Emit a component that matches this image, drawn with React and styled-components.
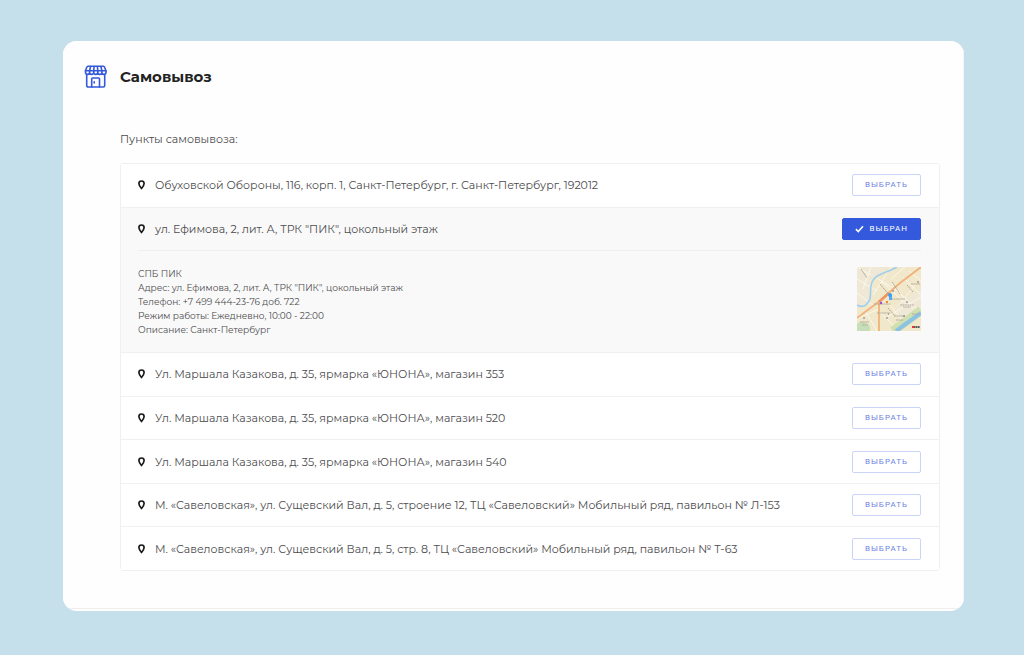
import React from 'react'
import styled, { createGlobalStyle, css } from 'styled-components'

const GlobalStyle = createGlobalStyle`
*{
    box-sizing:border-box;
}
body{
    margin:0;
    background:#c5dfeb;
    color:#4c4c4e;
    font-family:Montserrat, Inter, "Noto Sans", sans-serif;
}
`
const Page = styled.div`
min-height:100vh;
display:flex;
padding:41px 60px 44px 63px;
`
const Card = styled.main`
flex:1;
min-width:0;
display:flex;
overflow:hidden;
padding:0 0 2px;
background:#fff;
border-radius:14px;
`
const CardBody = styled.div`
flex:1;
min-width:0;
display:flex;
flex-direction:column;
padding:24px 23px 37px 21px;
background:#fefefe;
border-right:1px solid #f1f3f4;
border-bottom:1px solid #eeeeef;
`
const Header = styled.header`
display:flex;
align-items:center;
gap:12px;
height:24px;
margin:0 0 42px;
`
const Title = styled.h1`
margin:0;
font-size:15px;
line-height:24px;
font-weight:700;
color:#222;
`
const Section = styled.section`
flex:1;
display:flex;
flex-direction:column;
margin:0 0 0 36px;
`
const Subtitle = styled.h2`
margin:0 0 16px;
font-size:11px;
line-height:16px;
font-weight:400;
`
const List = styled.ul`
flex:1;
display:flex;
flex-direction:column;
margin:0;
padding:0;
list-style:none;
border:1px solid #f0f0f1;
border-radius:3px;
`
const Item = styled.li`
flex:1 0 auto;
display:flex;
flex-direction:column;
padding:0 18px 0 17px;
background:${({ $selected }) => ($selected ? '#f9f9f9' : '#fff')};
& + &{
    border-top:1px solid #f0f0f1;
}
`
const Row = styled.div`
flex:1 0 auto;
display:flex;
align-items:center;
gap:9px;
min-height:42px;
`
const Address = styled.span`
flex:1;
font-size:11px;
line-height:16px;
`
const SelectButton = styled.button`
display:flex;
align-items:center;
justify-content:center;
gap:6px;
height:22px;
padding:0 12px;
font-family:Roboto, Inter, sans-serif;
font-size:8px;
line-height:12px;
letter-spacing:1px;
text-transform:uppercase;
color:#6f84e3;
background:#fff;
border:1px solid #c9d4f8;
border-radius:2px;
cursor:pointer;
${({ $selected }) => $selected && css`
    color:#fff;
    background:#3459dc;
    border-color:#3459dc;
`}
`
const Details = styled.div`
display:flex;
justify-content:space-between;
align-items:flex-start;
padding:16px 0 15px;
border-top:1px solid #efefef;
`
const Info = styled.p`
margin:0;
font-size:9px;
line-height:14px;
`
const InfoLine = styled.span`
display:block;
`
const Map = styled.svg`
display:block;
width:64px;
height:64px;
`

const points = [
    { id: 1, address: 'Обуховской Обороны, 116, корп. 1, Санкт-Петербург, г. Санкт-Петербург, 192012' },
    {
        id: 2,
        address: 'ул. Ефимова, 2, лит. А, ТРК "ПИК", цокольный этаж',
        info: [
            'СПБ ПИК',
            'Адрес: ул. Ефимова, 2, лит. А, ТРК "ПИК", цокольный этаж',
            'Телефон: +7 499 444-23-76 доб. 722',
            'Режим работы: Ежедневно, 10:00 - 22:00',
            'Описание: Санкт-Петербург',
        ],
    },
    { id: 3, address: 'Ул. Маршала Казакова, д. 35, ярмарка «ЮНОНА», магазин 353' },
    { id: 4, address: 'Ул. Маршала Казакова, д. 35, ярмарка «ЮНОНА», магазин 520' },
    { id: 5, address: 'Ул. Маршала Казакова, д. 35, ярмарка «ЮНОНА», магазин 540' },
    { id: 6, address: 'М. «Савеловская», ул. Сущевский Вал, д. 5, строение 12, ТЦ «Савеловский» Мобильный ряд, павильон № Л-153' },
    { id: 7, address: 'М. «Савеловская», ул. Сущевский Вал, д. 5, стр. 8, ТЦ «Савеловский» Мобильный ряд, павильон № Т-63' },
]

function StoreIcon() {
    return (
        <svg width="24" height="24" viewBox="0 0 24 24" fill="none" stroke="#3459dc" strokeWidth="1.6" strokeLinecap="round" strokeLinejoin="round" aria-hidden="true">
            <path d="M4 1.300h15.400a1.300 1.300 0 0 1 1.200.9l1.300 3.600H1.500l1.300-3.600A1.300 1.300 0 0 1 4 1.300z" />
            <path d="M1.500 5.800v1.500a2 2 0 0 0 4.100 0V5.800m0 1.500a2 2 0 0 0 4.100 0V5.800m0 1.500a2 2 0 0 0 4.100 0V5.800m0 1.500a2 2 0 0 0 4.100 0V5.800m0 1.500a2 2 0 0 0 4.100 0V5.800" />
            <path d="M6.600 1.500l-1 4.300M10.100 1.500l-.4 4.300M13.400 1.500l.4 4.300M16.900 1.500l1 4.300" />
            <path d="M2.700 10v10.500A1.500 1.500 0 0 0 4.200 22h15a1.500 1.500 0 0 0 1.500-1.500V10" />
            <path d="M7.700 22v-8.200a.8.8 0 0 1 .8-.8h6.200a.8.8 0 0 1 .8.8V22M10.200 16.800v1.200" />
        </svg>
    )
}

function PinIcon() {
    return (
        <svg width="8" height="10" viewBox="0 0 8 10" fill="none" stroke="#1c1c1c" strokeWidth="1.7" strokeLinejoin="round" aria-hidden="true">
            <path d="M3.500 8.500C2.100 6.900.9 5.200.9 3.600a2.600 2.600 0 0 1 5.200 0c0 1.600-1.200 3.300-2.600 4.900z" />
        </svg>
    )
}

function CheckIcon() {
    return (
        <svg width="9" height="8" viewBox="0 0 9 8" fill="none" stroke="#fff" strokeWidth="1.6" aria-hidden="true">
            <path d="M.9 4.200 3.300 6.500 8 1.300" />
        </svg>
    )
}

function PickupMap() {
    return (
        <Map viewBox="0 0 64 64" role="img" aria-label="Карта">
            <rect width="64" height="64" fill="#f1e8cc" />
            <path d="M0 0h30L13 14 12 38 0 40zM38 40l26-18v16L44 56z" fill="#efe8d6" />
            <path d="M0 0 14 8M14 0l-8 22M0 12l20 12M18 10l26 16M34 0 16 28M24 14l26 24M34 16l22 26M48 0 34 12M46 10l18 18M52 4l12 10M0 26l16 12M40 24l22 20M64 30 30 50M22 44l18 18M8 44l12 20M0 52l22-10M30 34l20 26M58 18 42 38" stroke="#fbf7e9" strokeWidth="1" fill="none" />
            <path d="M40 0C30 6 18 7 15 15s0 14-3 19-6 7-12 4" stroke="#a0cfee" strokeWidth="1.600" fill="none" />
            <path d="M64 43 50 54l-14 10" stroke="#cfdfb0" strokeWidth="9" fill="none" />
            <path d="M64 46 50 56l-11 8" stroke="#8cc3e2" strokeWidth="4" fill="none" />
            <path d="M0 57c5-4 10-2 13 3v4H0z" fill="#c6dfb8" />
            <path d="M64 0 43 16 20 36 0 51M22 36v28" stroke="#f1b27a" strokeWidth="1.800" fill="none" />
            <path d="M32 26 22 35" stroke="#ef9560" strokeWidth="2.400" fill="none" />
            <path d="M4 2l6 9M23 17l10 12M35 15l8 12M50 18l6 7M31 41l7 8" stroke="#a99f90" strokeWidth=".9" strokeDasharray="2 .6" />
            <path d="M34 32h14M17 37h17M20 46h13M43 38h14M46 40h8M54 17h9M37 49h11M39 53h7M3 55h9M5 58h6M55 47h8" stroke="#b0a799" strokeWidth=".9" strokeDasharray="2 .4" />
            <path d="M6 51h2M29 51h2M46 49h2M49 35h2M60 15h2M35 24h2M31 47h1" stroke="#77757f" strokeWidth="1.200" />
            <path d="M32 27h3v6h-3z" fill="#55aaf2" />
            <circle cx="33" cy="28" r="2" fill="#3fa0f4" />
            <circle cx="24" cy="36" r="1.200" fill="#9b4be0" />
            <path d="M29 35h2" stroke="#f08a38" strokeWidth="2" />
            <path d="M55 60h8" stroke="#5d5a5a" strokeWidth="2.200" strokeDasharray="1.500 .4" />
            <path d="M55 60h2" stroke="#e33" strokeWidth="2.200" />
        </Map>
    )
}

export default function App() {
    const [selected, setSelected] = React.useState(2)

    return (
        <>
            <GlobalStyle />
            <Page>
                <Card>
                    <CardBody>
                        <Header>
                            <StoreIcon />
                            <Title>Самовывоз</Title>
                        </Header>
                        <Section>
                            <Subtitle>Пункты самовывоза:</Subtitle>
                            <List>
                                {points.map(point => {
                                    const isSelected = point.id === selected
                                    return (
                                        <Item key={point.id} $selected={isSelected}>
                                            <Row>
                                                <PinIcon />
                                                <Address>{point.address}</Address>
                                                <SelectButton type="button" $selected={isSelected} aria-pressed={isSelected} onClick={() => setSelected(point.id)}>
                                                    {isSelected && <CheckIcon />}
                                                    {isSelected ? 'Выбран' : 'Выбрать'}
                                                </SelectButton>
                                            </Row>
                                            {isSelected && point.info && (
                                                <Details>
                                                    <Info>
                                                        {point.info.map(line => <InfoLine key={line}>{line}</InfoLine>)}
                                                    </Info>
                                                    <PickupMap />
                                                </Details>
                                            )}
                                        </Item>
                                    )
                                })}
                            </List>
                        </Section>
                    </CardBody>
                </Card>
            </Page>
        </>
    )
}
